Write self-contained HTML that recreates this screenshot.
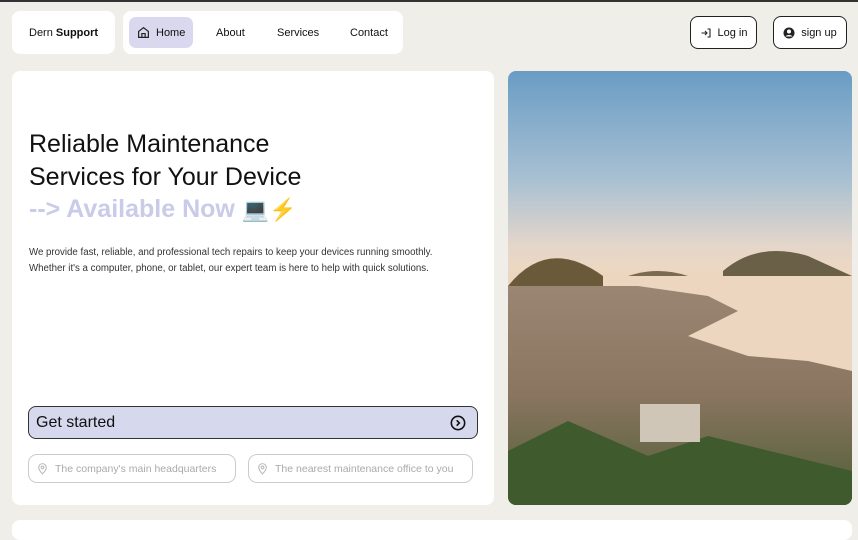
<!DOCTYPE html>
<html><head><style>
body{margin:0;width:858px;height:526px;background:#efeee9;font-family:"Liberation Sans",sans-serif;position:relative;overflow:hidden;color:#111}
.abs{position:absolute;box-sizing:border-box}
.w{background:#fff;border-radius:8px}
.nav a{position:absolute;top:27px;font-size:11px;color:#111}
.btn{border:1px solid #222;border-radius:8px;background:#fff;font-size:11px;display:flex;align-items:center;justify-content:center;gap:6px}
.loc{border:1.5px solid #ccc;border-radius:9px;font-size:10.5px;color:#aaa;display:flex;align-items:center;gap:6px;padding-left:7px}
</style></head><body>
<div class="abs" style="left:0;top:0;width:858px;height:2px;background:#333"></div>
<div class="abs w" style="left:12px;top:11px;width:103px;height:43px;font-size:11px;padding:16px 0 0 17px">Dern <b>Support</b></div>
<div class="abs w" style="left:123px;top:11px;width:280px;height:43px"></div>
<div class="abs" style="left:129px;top:17px;width:64px;height:31px;background:#d8d9ef;border-radius:7px"></div>
<svg class="abs" style="left:137px;top:26px" width="13" height="13" viewBox="0 0 24 24" fill="none" stroke="#222" stroke-width="2.2"><path d="M3 10l9-7 9 7v11H3z"/><path d="M9 21v-7h6v7"/></svg>
<div class="nav"><a style="left:156px">Home</a><a style="left:216px">About</a><a style="left:277px">Services</a><a style="left:350px">Contact</a></div>
<div class="abs btn" style="left:690px;top:16px;width:67px;height:33px"><svg width="12" height="12" viewBox="0 0 24 24" fill="none" stroke="#222" stroke-width="2.2"><path d="M3 12h11M10 8l4 4-4 4M15 4h5v16h-5"/></svg>Log in</div>
<div class="abs btn" style="left:773px;top:16px;width:74px;height:33px"><svg width="12" height="12" viewBox="0 0 24 24"><circle cx="12" cy="12" r="11" fill="#222"/><circle cx="12" cy="9" r="4" fill="#fff"/><path d="M5 19c2-4 12-4 14 0" fill="#fff"/></svg>sign up</div>
<div class="abs w" style="left:12px;top:71px;width:482px;height:434px"></div>
<div class="abs" style="left:29px;top:128px;font-size:25px;line-height:32.5px;color:#111">Reliable Maintenance<br>Services for Your Device<br><span style="color:#c9cbe8;font-weight:bold">--&gt; Available Now</span> <span style="font-size:22px">💻⚡</span></div>
<div class="abs" style="left:29px;top:245px;font-size:9.7px;line-height:16px;color:#333">We provide fast, reliable, and professional tech repairs to keep your devices running smoothly.<br>Whether it's a computer, phone, or tablet, our expert team is here to help with quick solutions.</div>
<div class="abs" style="left:28px;top:406px;width:450px;height:33px;background:#d6d9ee;border:1px solid #333;border-radius:8px;font-size:16px;padding:7px 0 0 7px">Get started
<svg style="position:absolute;right:11px;top:8px" width="16" height="16" viewBox="0 0 24 24" fill="none" stroke="#111" stroke-width="2.4"><circle cx="12" cy="12" r="10"/><path d="M10 8l4 4-4 4"/></svg></div>
<div class="abs loc" style="left:28px;top:454px;width:208px;height:29px"><svg width="13" height="13" viewBox="0 0 24 24" fill="none" stroke="#bbb" stroke-width="2"><path d="M12 22s7-7 7-12a7 7 0 0 0-14 0c0 5 7 12 7 12z"/><circle cx="12" cy="10" r="2.5"/></svg>The company's main headquarters</div>
<div class="abs loc" style="left:248px;top:454px;width:225px;height:29px"><svg width="13" height="13" viewBox="0 0 24 24" fill="none" stroke="#bbb" stroke-width="2"><path d="M12 22s7-7 7-12a7 7 0 0 0-14 0c0 5 7 12 7 12z"/><circle cx="12" cy="10" r="2.5"/></svg>The nearest maintenance office to you</div>
<svg class="abs" style="left:508px;top:71px;border-radius:8px" width="344" height="434" viewBox="0 0 344 434">
<defs><linearGradient id="s" x1="0" y1="0" x2="0" y2="1"><stop offset="0" stop-color="#6a9cc4"/><stop offset=".25" stop-color="#a8c0d2"/><stop offset=".4" stop-color="#e3d6ca"/><stop offset=".5" stop-color="#f4d8bc"/></linearGradient>
<linearGradient id="t" x1="0" y1="0" x2="0" y2="1"><stop offset="0" stop-color="#9a8672"/><stop offset=".5" stop-color="#8a7560"/><stop offset="1" stop-color="#4d5e35"/></linearGradient></defs>
<rect width="344" height="434" fill="url(#s)"/>
<rect y="200" width="344" height="140" fill="#ecd6c0"/>
<path d="M0 215 Q40 165 95 205 L95 215 L0 215z" fill="#6b5a3a"/>
<path d="M215 200 Q250 170 300 185 L344 205 L215 205z" fill="#6a6048"/>
<path d="M120 205 Q150 195 180 205z" fill="#7a6a50"/>
<path d="M0 215 L130 215 L200 225 L230 240 L180 265 L240 285 L300 290 L344 300 L344 434 L0 434z" fill="url(#t)"/>
<path d="M0 380 L60 350 L140 385 L200 365 L344 400 L344 434 L0 434z" fill="#3f5a2c"/>
<rect x="132" y="333" width="60" height="38" fill="#cfc6b8"/>
</svg>
<div class="abs w" style="left:12px;top:520px;width:840px;height:20px"></div>
</body></html>
